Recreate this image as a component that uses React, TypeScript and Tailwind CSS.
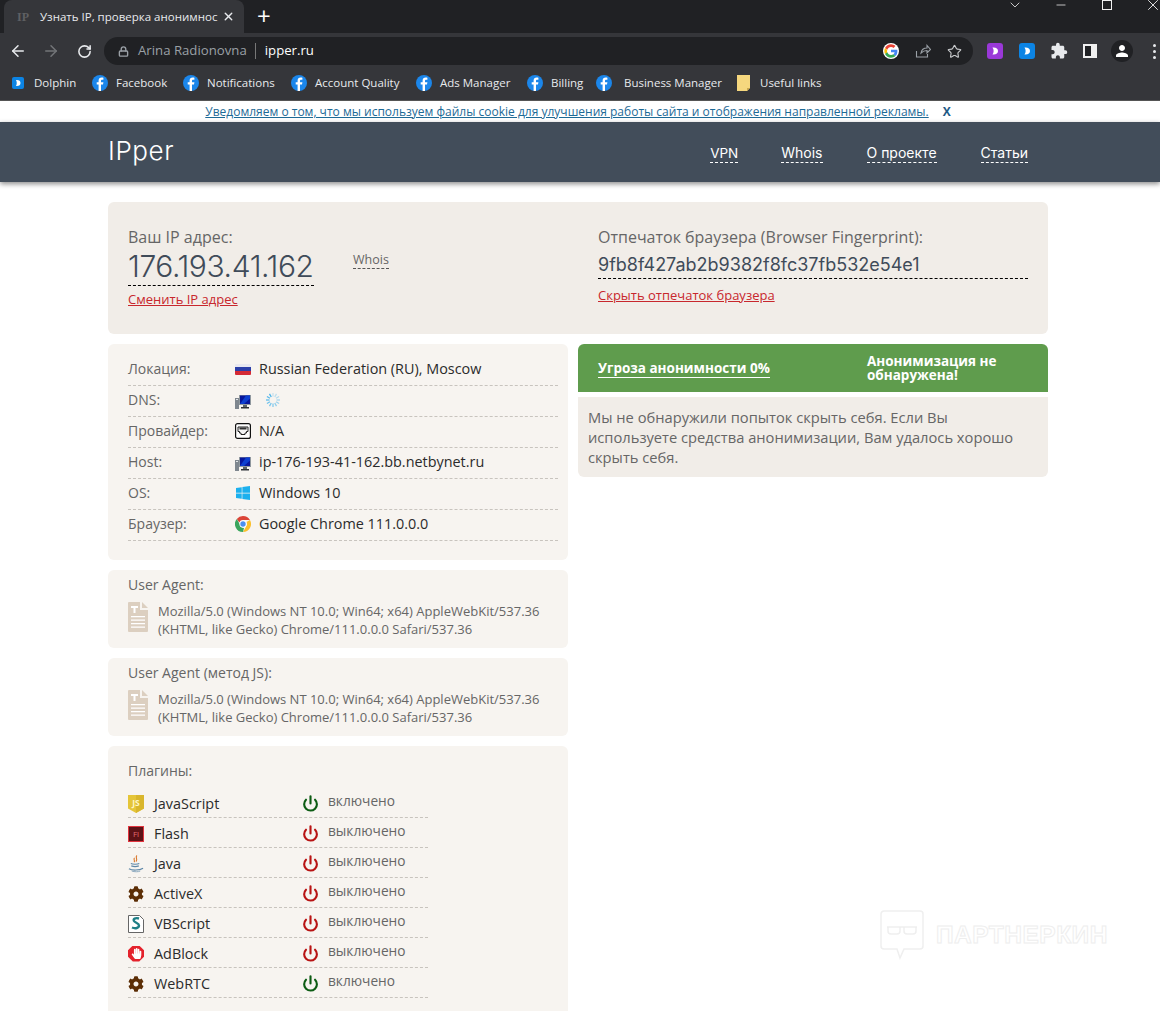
import React from "react";
import { ArrowLeft, ArrowRight, ChevronDown, Lock, Minus, Power, RotateCw, Star, X } from "lucide-react";
import { FaCog, FaHandPaper, FaWindows } from "react-icons/fa";
import { MdExtension, MdPerson } from "react-icons/md";

const bookmarks = [
  { label: "Facebook", w: "w-[91px]", gap: "gap-2" },
  { label: "Notifications", w: "w-[108px]", gap: "gap-2" },
  { label: "Account Quality", w: "w-[125px]", gap: "gap-2" },
  { label: "Ads Manager", w: "w-[111px]", gap: "gap-2" },
  { label: "Billing", w: "w-[69px]", gap: "gap-2" },
  { label: "Business Manager", w: "w-[139px]", gap: "gap-3" },
];

const infoRows = [
  { label: "Локация:", icon: "flag", value: "Russian Federation (RU), Moscow" },
  { label: "DNS:", icon: "monitor", value: "" },
  { label: "Провайдер:", icon: "port", value: "N/A" },
  { label: "Host:", icon: "monitor", value: "ip-176-193-41-162.bb.netbynet.ru" },
  { label: "OS:", icon: "windows", value: "Windows 10" },
  { label: "Браузер:", icon: "chrome", value: "Google Chrome 111.0.0.0" },
];

const plugins = [
  { name: "JavaScript", icon: "js", on: true },
  { name: "Flash", icon: "flash", on: false },
  { name: "Java", icon: "java", on: false },
  { name: "ActiveX", icon: "gear", on: false },
  { name: "VBScript", icon: "vb", on: false },
  { name: "AdBlock", icon: "adblock", on: false },
  { name: "WebRTC", icon: "gear", on: true },
];

function FacebookIcon() {
  return (
    <svg width="16" height="16" viewBox="0 0 16 16" className="shrink-0">
      <circle cx="8" cy="8" r="8" fill="#1b86ea" />
      <path d="M9 16V9.6h2l.4-2.3H9V6c0-.8.3-1.2 1.2-1.2h1.2V2.7c-.5-.1-1.100-.2-1.800-.2-1.800 0-3 1.100-3 3v1.800H4.700v2.300h1.900V16z" fill="#fff" />
    </svg>
  );
}

function DolphinIcon({ bg }: { bg: string }) {
  return (
    <svg width="16" height="16" viewBox="0 0 16 16" className="shrink-0">
      <rect width="16" height="16" rx="3" fill={bg} />
      <path d="M5.500 4.500c3.500-.4 5.500 1.100 5.500 3.500s-2 3.900-5.500 3.500c1.500-2 1.500-5 0-7z" fill="#fff" />
    </svg>
  );
}

function GoogleIcon() {
  return (
    <svg width="16" height="16" viewBox="0 0 48 48">
      <circle cx="24" cy="24" r="24" fill="#fff" />
      <path fill="#ea4335" d="M24 12c3 0 5.600 1 7.700 3l5.700-5.700C33.900 6.100 29.400 4 24 4 16.200 4 9.400 8.500 6.100 15l6.700 5.200C14.400 15.400 18.800 12 24 12z" />
      <path fill="#4285f4" d="M43.200 24.500c0-1.400-.1-2.700-.4-4H24v7.600h10.800c-.5 2.500-1.900 4.600-4 6l6.500 5c3.700-3.500 5.900-8.600 5.900-14.600z" />
      <path fill="#fbbc05" d="M12.800 28.800c-.4-1.200-.7-2.500-.7-3.800s.2-2.600.7-3.800L6.100 15C4.800 17.700 4 20.800 4 24s.8 6.300 2.100 9z" />
      <path fill="#34a853" d="M24 44c5.400 0 9.900-1.800 13.300-4.900l-6.500-5c-1.800 1.200-4.100 1.900-6.800 1.900-5.200 0-9.600-3.400-11.200-8.200L6.100 33c3.300 6.500 10.100 11 17.900 11z" />
    </svg>
  );
}

function MonitorIcon() {
  return (
    <svg width="16" height="16" viewBox="0 0 16 16" className="shrink-0">
      <rect x="0" y="4" width="4" height="11" fill="#7f878f" />
      <rect x="1" y="5" width="2" height="1" fill="#dfe3e6" />
      <rect x="4" y="1" width="12" height="10" fill="#8f979e" />
      <rect x="5" y="1.500" width="10" height="8.500" fill="#07169c" />
      <path d="M5 10l6-8.500h4v3l-6 5.500z" fill="#0d3fd0" />
      <rect x="8" y="11" width="4" height="2" fill="#5c6369" />
      <rect x="6" y="13" width="8" height="1.500" fill="#2d3136" />
    </svg>
  );
}

function FlagIcon() {
  return (
    <div className="flex h-[11px] w-4 flex-col overflow-hidden rounded-[1px]">
      <div className="h-[3px] bg-[#e8e8f0]" />
      <div className="h-1 bg-[#2c3fa8]" />
      <div className="h-1 bg-[#d42a35]" />
    </div>
  );
}

function PortIcon() {
  return (
    <svg width="16" height="16" viewBox="0 0 16 16" className="shrink-0">
      <rect x="0.600" y="0.600" width="14.800" height="14.800" rx="2" fill="#fff" stroke="#111" strokeWidth="1.200" />
      <path d="M3 4h10v4.500h-1.500V10H10v1.500H6V10H4.500V8.500H3z" fill="#f4f4f4" stroke="#222" strokeWidth="1" />
      <rect x="4.500" y="4.500" width="7" height="2" fill="#333" />
    </svg>
  );
}

function ChromeIcon() {
  return (
    <svg width="16" height="16" viewBox="0 0 16 16" className="shrink-0">
      <path d="M8 0a8 8 0 0 1 6.930 4H8a4 4 0 0 0-3.700 2.400L1.800 2.900A8 8 0 0 1 8 0z" fill="#db4437" />
      <path d="M14.930 4A8 8 0 0 1 8 16l3.400-5.900A4 4 0 0 0 11.500 6z" fill="#fbc02d" />
      <path d="M8 16A8 8 0 0 1 1.800 2.900l3.300 5.800A4 4 0 0 0 9 11.900z" fill="#3ba55d" />
      <circle cx="8" cy="8" r="3.600" fill="#fff" />
      <circle cx="8" cy="8" r="2.700" fill="#4a8ff0" />
    </svg>
  );
}

function Spinner() {
  const ticks = [0, 30, 60, 90, 120, 150, 180, 210, 240, 270, 300, 330];
  return (
    <svg width="16" height="16" viewBox="0 0 16 16" className="ml-[14px] shrink-0">
      {ticks.map((deg, i) => (
        <line key={deg} x1="8" y1="1" x2="8" y2="4.500" stroke="#3fb0ea" strokeOpacity={0.25 + (i / 12) * 0.75} strokeWidth="1.300" transform={`rotate(${deg} 8 8)`} />
      ))}
    </svg>
  );
}

function FileIcon() {
  return (
    <svg width="20" height="30" viewBox="0 0 20 30" className="shrink-0">
      <path d="M1 0h11v8h8v21a1 1 0 0 1-1 1H1a1 1 0 0 1-1-1V1a1 1 0 0 1 1-1z" fill="#dccfc0" />
      <path d="M14 0l6 6h-6z" fill="#dccfc0" />
      <path d="M3 4h7v2H7.500v5h-2V6H3z" fill="#fff" />
      <path d="M3 14h14v1.300H3zM3 17.500h14v1.300H3zM3 21h14v1.300H3zM3 24.500h14v1.300H3z" fill="#fff" />
    </svg>
  );
}

function InfoIcon({ name }: { name: string }) {
  if (name === "flag") return <FlagIcon />;
  if (name === "monitor") return <div className="pt-[3px]"><MonitorIcon /></div>;
  if (name === "port") return <PortIcon />;
  if (name === "windows") return <FaWindows className="h-4 w-4 text-[#1cb0ee]" />;
  return <ChromeIcon />;
}

function PluginIcon({ name }: { name: string }) {
  if (name === "js") {
    return (
      <svg width="16" height="18" viewBox="0 0 16 18">
        <path d="M0 0h16v13.500L8 18 0 13.500z" fill="#e5c538" />
        <path d="M8 0h8v13.500L8 18z" fill="#d9b62c" />
        <text x="8" y="11" textAnchor="middle" fontSize="8.500" fontWeight="700" fill="#fff6c4">JS</text>
      </svg>
    );
  }
  if (name === "flash") {
    return (
      <div className="flex h-4 w-4 items-center justify-center border border-[#e2343e] bg-[#5c1216] text-[8px] text-[#e26a6f]">Fl</div>
    );
  }
  if (name === "java") {
    return (
      <svg width="17" height="18" viewBox="0 0 17 18" fill="none">
        <path d="M9.500 0C7 2 11 3.500 8.500 6.500M7 2.500C5 4 8 5 6.500 7" stroke="#d9772b" strokeWidth="1.200" />
        <path d="M3 8.500c2 1 7 1 9 0M3.500 11c2 .8 6 .8 8 0M1 14c3 2 11 2 15-.5" stroke="#5f88a8" strokeWidth="1.200" />
        <path d="M4 16.500c3 1 7 1 9 0" stroke="#8aa6bd" strokeWidth="1" />
      </svg>
    );
  }
  if (name === "gear") return <FaCog className="h-4 w-4 text-[#5c2e06]" />;
  if (name === "vb") {
    return (
      <svg width="16" height="18" viewBox="0 0 16 18">
        <path d="M.5.500h11l4 4v13H.500z" fill="#fff" stroke="#666" />
        <path d="M11 3.500C7 2.500 5 4 6 6c1 1.800 5 2 5 4.500S7.500 14 4 12.500" fill="none" stroke="#1f7f86" strokeWidth="2.400" />
      </svg>
    );
  }
  return (
    <div className="flex h-4 w-4 items-center justify-center bg-[#e4222c] [clip-path:polygon(30%_0,70%_0,100%_30%,100%_70%,70%_100%,30%_100%,0_70%,0_30%)]">
      <FaHandPaper className="h-[11px] w-[11px] text-white" />
    </div>
  );
}

function UserAgentCard({ title }: { title: string }) {
  return (
    <div className="h-[78px] rounded-md bg-[#f7f4f0] px-5 pt-[5px]">
      <div className="text-[14px] leading-5 text-[#666]">{title}</div>
      <div className="mt-[7px] flex gap-[10px]">
        <FileIcon />
        <div className="text-[13px] leading-[18px] text-[#666]">
          Mozilla/5.0 (Windows NT 10.0; Win64; x64) AppleWebKit/537.36
          <br />
          (KHTML, like Gecko) Chrome/111.0.0.0 Safari/537.36
        </div>
      </div>
    </div>
  );
}

export default function App() {
  return (
    <div className="relative h-[1011px] w-[1160px] overflow-hidden bg-white font-['Open_Sans',sans-serif]">
      {/* browser chrome */}
      <div className="flex h-[33px] items-start bg-[#202124] text-white">
        <div className="ml-1 flex h-[33px] w-[240px] items-center rounded-t-lg bg-[#35363a] pl-[13px]">
          <span className="w-[23px] font-['Liberation_Serif',serif] text-[12px] font-bold text-[#5f6063]">IP</span>
          <span className="w-[177px] whitespace-nowrap text-[11.500px] text-[#e8eaed]">Узнать IP, проверка анонимнос</span>
          <X size={13} strokeWidth={2.500} className="ml-[5px] text-[#e8eaed]" />
        </div>
        <span className="ml-[13px] mt-[4px] text-[24px] leading-6 font-normal">+</span>
        <div className="ml-auto -mt-[4px] flex items-center text-[#f2f2f2]">
          <ChevronDown size={16} strokeWidth={1.200} className="mr-[31px]" />
          <Minus size={14} strokeWidth={1.300} className="mr-[34px]" />
          <div className="mr-[32px] h-[10px] w-[10px] border border-[#f2f2f2]" />
          <X size={18} strokeWidth={1.200} className="-mr-[2px]" />
        </div>
      </div>
      <div className="flex h-[35px] items-center bg-[#35363a] pl-[9px] pt-px text-[#e8eaed]">
        <ArrowLeft size={18} strokeWidth={2} />
        <ArrowRight size={18} strokeWidth={2} className="ml-[15px] text-[#737578]" />
        <RotateCw size={15} strokeWidth={2.500} className="ml-[17px]" />
        <div className="ml-[12px] flex h-7 w-[869px] items-center rounded-full bg-[#202124] pl-[14px] text-[13.200px]">
          <Lock size={11} strokeWidth={3} className="text-[#9aa0a6]" />
          <span className="ml-[9px] text-[#9aa0a6]">Arina Radionovna</span>
          <span className="ml-2 h-4 w-px bg-[#777]" />
          <span className="ml-[9px] text-white">ipper.ru</span>
          <div className="ml-auto flex items-center pr-[11px]">
            <GoogleIcon />
            <svg width="16" height="16" viewBox="0 0 16 16" fill="none" stroke="#9aa0a6" strokeWidth="1.100" className="ml-4">
              <path d="M1.500 8v6h11v-3M6 10c.5-3 3-5 6-5V2.500L15.500 6.500 12 10V7.500c-2.500 0-4.500 1-6 2.500z" />
            </svg>
            <Star size={15} strokeWidth={1.800} className="ml-4 text-[#c8cacc]" />
          </div>
        </div>
        <div className="ml-[14px]"><DolphinIcon bg="#9a38d8" /></div>
        <div className="ml-4"><DolphinIcon bg="#0c84e4" /></div>
        <MdExtension size={18} className="ml-[15px] text-[#e8eaed]" />
        <div className="ml-[15px] flex h-[14px] w-[14px] justify-start border-2 border-[#f0f0f0]">
          <div className="h-full w-[6px] bg-[#202124]" />
          <div className="h-full flex-1 bg-[#f0f0f0]" />
        </div>
        <div className="ml-[14px] flex h-[22px] w-[22px] items-center justify-center rounded-full bg-[#202124]">
          <MdPerson size={18} className="text-white" />
        </div>
        <div className="ml-[20px] flex flex-col gap-[3px]">
          <div className="h-[3px] w-[3px] rounded-full bg-[#e8eaed]" />
          <div className="h-[3px] w-[3px] rounded-full bg-[#e8eaed]" />
          <div className="h-[3px] w-[3px] rounded-full bg-[#e8eaed]" />
        </div>
      </div>
      <div className="flex h-[33px] items-center border-b border-[#555] bg-[#35363a] pb-[2px] pl-[10px] text-[11.500px] text-[#e8eaed]">
        <div className="flex w-[82px] items-center gap-[8px]">
          <svg width="16" height="16" viewBox="0 0 16 16" className="shrink-0">
            <rect x="2" y="2" width="12" height="12" rx="2" fill="#0c84e4" />
            <path d="M6 5c3-.3 4.500.8 4.500 3S9 11.300 6 11c1-1.800 1-4.200 0-6z" fill="#fff" />
          </svg>
          Dolphin
        </div>
        {bookmarks.map((b) => (
          <div key={b.label} className={`flex items-center ${b.gap} ${b.w}`}>
            <FacebookIcon />
            <span className="whitespace-nowrap">{b.label}</span>
          </div>
        ))}
        <div className="ml-[2px] flex items-center gap-[10px]">
          <svg width="13" height="16" viewBox="0 0 13 16">
            <path d="M0 0h13v13l-3 3H0z" fill="#f5d77e" />
            <path d="M10 16v-3h3z" fill="#caa94e" />
          </svg>
          Useful links
        </div>
      </div>

      {/* cookie notice */}
      <div className="flex h-[21px] items-center justify-center gap-[14px] bg-white pr-1 text-[12px]">
        <a className="text-[#1d6a96] underline">Уведомляем о том, что мы используем файлы cookie для улучшения работы сайта и отображения направленной рекламы.</a>
        <span className="text-[12px] font-bold text-[#1d5a86]">X</span>
      </div>

      {/* site header */}
      <header className="flex h-[60px] items-center justify-between bg-[#424d5a] pl-[108px] pr-[132px] shadow-[0_2px_5px_rgba(0,0,0,0.45)]">
        <div className="mb-1 font-['Inter',sans-serif] text-[26px] font-light tracking-[0.6px] text-white">IPper</div>
        <nav className="mt-[3px] flex gap-[44px] font-['Inter',sans-serif] text-[14px] text-white">
          <a className="-mr-px border-b border-dashed border-white text-[13.500px] leading-[18px]">VPN</a>
          <a className="border-b border-dashed border-white leading-[18px]">Whois</a>
          <a className="border-b border-dashed border-white leading-[18px]">О проекте</a>
          <a className="border-b border-dashed border-white leading-[18px]">Статьи</a>
        </nav>
      </header>

      {/* content */}
      <main className="ml-[108px] w-[940px] pt-5">
        <section className="flex h-[132px] rounded-md bg-[#f1ede8] px-5 pt-[24px]">
          <div className="w-[225px]">
            <div className="text-[16px] leading-[22px] text-[#666]">Ваш IP адрес:</div>
            <div className="w-fit border-b border-dashed border-black font-['Inter',sans-serif] text-[30px] font-light leading-[37px] tracking-[-0.4px] text-[#3f4b59]">176.193.41.162</div>
            <a className="mt-[4px] block text-[13px] leading-[18px] text-[#c8272d] underline">Сменить IP адрес</a>
          </div>
          <div className="w-[245px] pt-[20px]">
            <a className="border-b border-dashed border-[#555] text-[12.500px] leading-[17px] text-[#666]">Whois</a>
          </div>
          <div className="w-[430px]">
            <div className="text-[16px] leading-[22px] text-[#666]">Отпечаток браузера (Browser Fingerprint):</div>
            <div className="mt-[4px] border-b border-dashed border-black font-['Inter',sans-serif] text-[18px] leading-[26px] text-[#3f4b59]">9fb8f427ab2b9382f8fc37fb532e54e1</div>
            <a className="mt-[7px] block text-[13px] leading-[18px] text-[#c8272d] underline">Скрыть отпечаток браузера</a>
          </div>
        </section>

        <div className="mt-[10px] flex gap-[10px]">
          <div className="flex w-[460px] flex-col gap-[10px]">
            <section className="h-[216px] rounded-md bg-[#f7f4f0] pl-5 pr-[10px] pt-[11px]">
              {infoRows.map((row) => (
                <div key={row.label} className="flex h-[31px] items-center border-b border-dashed border-[#c8c4be] pb-[2px]">
                  <div className="w-[107px] -translate-y-px text-[14px] text-[#666]">{row.label}</div>
                  <div className="flex w-4 justify-center"><InfoIcon name={row.icon} /></div>
                  {row.label === "DNS:" && <Spinner />}
                  <div className="ml-2 text-[14.400px] font-medium text-[#2b2b2b]">{row.value}</div>
                </div>
              ))}
            </section>
            <UserAgentCard title="User Agent:" />
            <UserAgentCard title="User Agent (метод JS):" />
            <section className="h-[300px] rounded-md bg-[#f7f4f0] px-5 pt-[15px]">
              <div className="mb-[7px] text-[14px] leading-5 text-[#666]">Плагины:</div>
              {plugins.map((p) => (
                <div key={p.name} className="flex h-[30px] w-[300px] items-center border-b border-dashed border-[#c8c4be] pt-[2px]">
                  <div className="flex w-4 justify-center"><PluginIcon name={p.icon} /></div>
                  <div className="ml-[10px] w-[149px] text-[14.400px] font-medium text-[#2b2b2b]">{p.name}</div>
                  <Power size={17} strokeWidth={3} className={p.on ? "-ml-px text-[#0d5c14]" : "-ml-px text-[#b81414]"} />
                  <div className="ml-[9px] -translate-y-[2px] text-[13.700px] text-[#666]">{p.on ? "включено" : "выключено"}</div>
                </div>
              ))}
            </section>
          </div>
          <div className="w-[470px]">
            <div className="flex h-[48px] items-center rounded-t-md bg-[#5f9c4d] pl-5 text-[13.500px] font-bold text-white">
              <div className="w-[269px]">
                <span className="border-b border-white">Угроза анонимности 0%</span>
              </div>
              <div className="w-[150px] leading-[14px]">Анонимизация не обнаружена!</div>
            </div>
            <div className="mt-[5px] h-[80px] rounded-b-md bg-[#f1ede8] px-[10px] pt-[10px] text-[14.700px] leading-5 text-[#666]">
              Мы не обнаружили попыток скрыть себя. Если Вы используете средства анонимизации, Вам удалось хорошо скрыть себя.
            </div>
          </div>
        </div>
      </main>

      {/* faint watermark over the page */}
      <div className="absolute left-[880px] top-[910px] flex items-center gap-3">
        <svg width="44" height="50" viewBox="0 0 44 50" fill="none" stroke="#efefef" strokeWidth="1.500">
          <path d="M4 1h36a3 3 0 0 1 3 3v32a3 3 0 0 1-3 3H24l-4 9-3-9H4a3 3 0 0 1-3-3V4a3 3 0 0 1 3-3z" />
          <path d="M7 17h30M8 17v4a3 3 0 0 0 3 3h6a3 3 0 0 0 3-3v-4M24 17v4a3 3 0 0 0 3 3h6a3 3 0 0 0 3-3v-4" />
        </svg>
        <span className="font-['Liberation_Sans',sans-serif] text-[24.500px] font-bold tracking-[0.5px] text-white [-webkit-text-stroke:1px_#eeeeee]">ПАРТНЕРКИН</span>
      </div>
    </div>
  );
}
